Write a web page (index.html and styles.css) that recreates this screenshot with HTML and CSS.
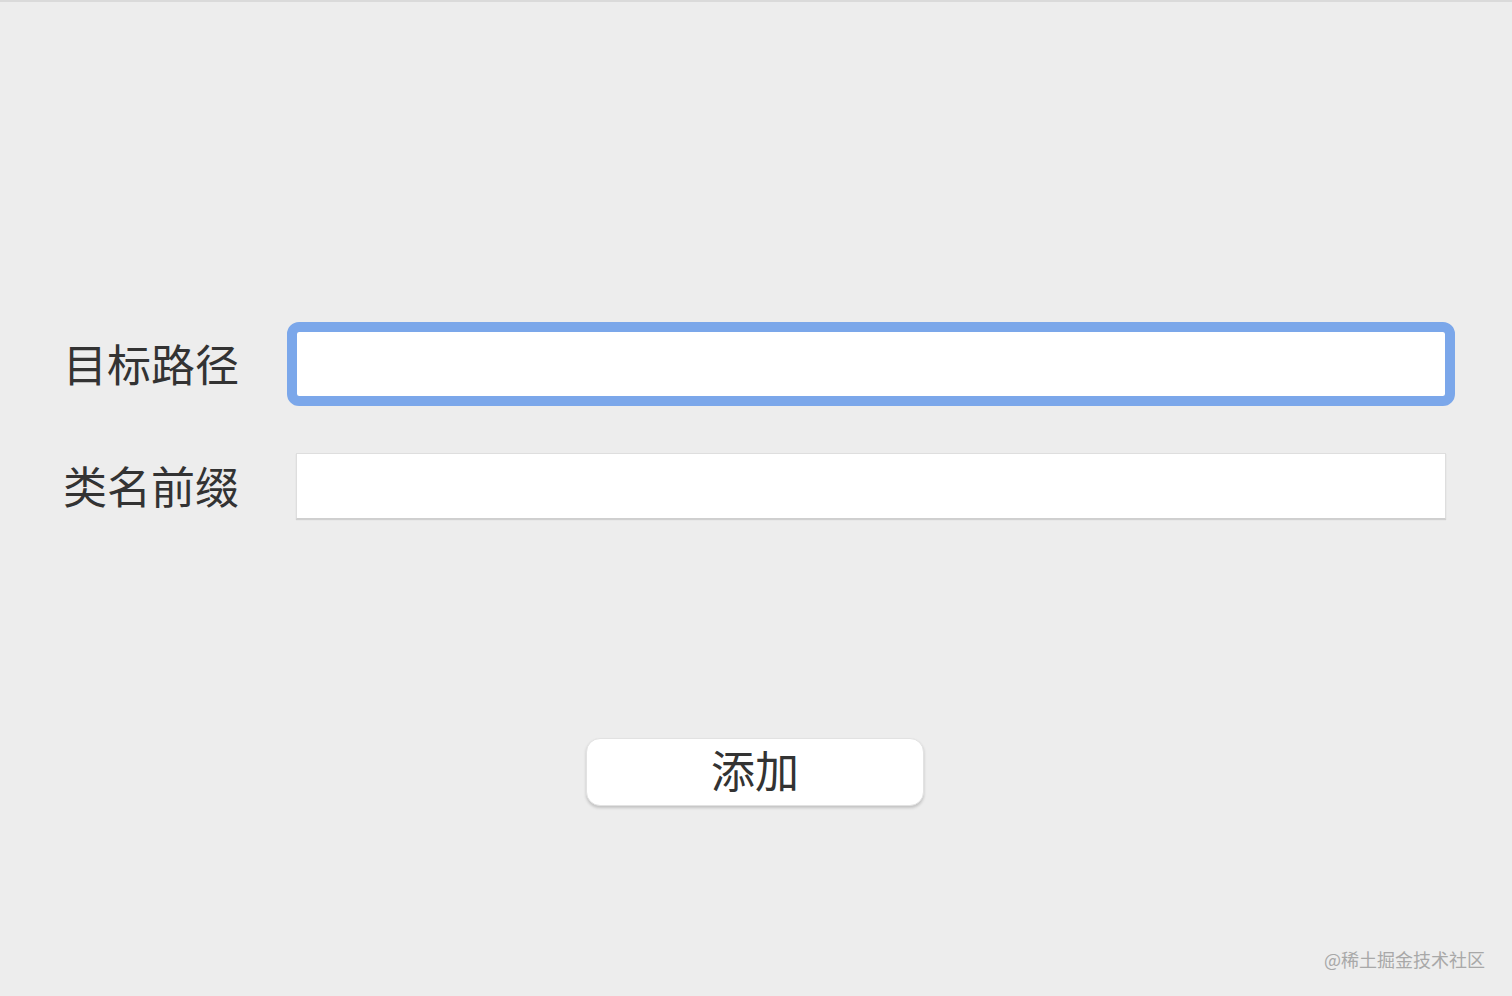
FILE: index.html
```html
<!DOCTYPE html>
<html lang="zh-CN">
<head>
  <meta charset="UTF-8">
  <meta name="viewport" content="width=device-width, initial-scale=1.0">
  <title>添加</title>
  <link rel="stylesheet" href="styles.css">
</head>
<body>

  <!-- 表单 -->
  <div class="form-container">
    <div class="form-group">
      <label for="target-path">目标路径</label>
      <input type="text" id="target-path" class="is-focused">
    </div>

    <div class="form-group">
      <label for="class-prefix">类名前缀</label>
      <input type="text" id="class-prefix">
    </div>

    <div class="actions">
      <button type="button">添加</button>
    </div>
  </div>

  <div class="watermark">@稀土掘金技术社区</div>

</body>
</html>
```

FILE: styles.css
```css
body {
  font-family: "Noto Sans CJK SC", "Noto Sans", sans-serif;
  margin: 0;
  padding: 0;
  background-color: #ededed;
  color: #333;
  border-top: 2px solid #dadada;
  height: 994px;
  position: relative;
  overflow: hidden;
}

.form-container {
  padding: 329px 66px 0 62px;
}

.form-group {
  display: grid;
  grid-template-columns: 234px 1fr;
  align-items: center;
  margin-bottom: 56px;
}

label {
  font-size: 44px;
  line-height: 64px;
  padding-bottom: 2px;
  color: #333;
  padding-left: 1px;
}

input[type="text"] {
  height: 66px;
  width: 100%;
  box-sizing: border-box;
  border: 1px solid #dedede;
  border-bottom-color: #cfcfcf;
  background-color: #fff;
  box-shadow: 0 1px 1px rgba(0, 0, 0, 0.12);
  font-size: 24px;
  padding: 0 10px;
  margin: 0;
}

/* 获取焦点时的蓝色外框 */
input.is-focused {
  outline: 10px solid #7ba7ea;
  outline-offset: -1px;
  border-radius: 3px;
  box-shadow: none;
}

.actions {
  display: flex;
  justify-content: center;
  margin-top: 219px;
}

button {
  width: 338px;
  height: 68px;
  background-color: #fff;
  border: 1px solid #e2e2e2;
  border-radius: 14px;
  box-shadow: 0 2px 3px rgba(0, 0, 0, 0.18);
  font-family: inherit;
  font-size: 44px;
  line-height: 1;
  color: #333;
  padding: 0 0 6px;
  margin-left: 2px;
  cursor: pointer;
}

/* 水印 */
.watermark {
  position: absolute;
  right: 27px;
  bottom: 24px;
  font-size: 18px;
  color: #a8a8a8;
}
```
